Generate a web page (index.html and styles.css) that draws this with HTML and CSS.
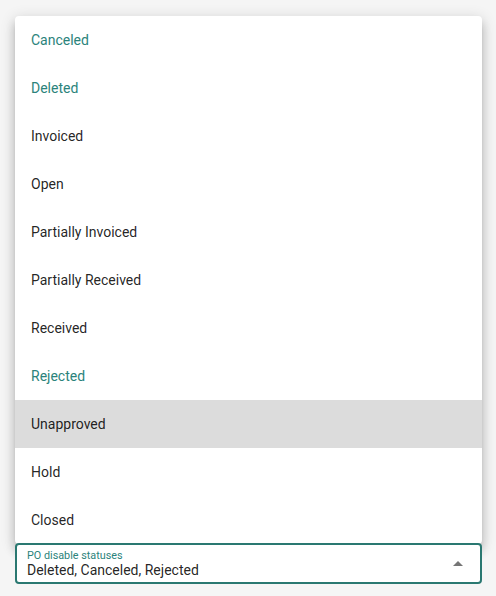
FILE: index.html
```html
<!DOCTYPE html>
<html>
<head>
<meta charset="utf-8">
<link rel="stylesheet" href="styles.css">
</head>
<body>
<div class="wrap">
  <ul class="menu">
    <li class="item selected">Canceled</li>
    <li class="item selected">Deleted</li>
    <li class="item">Invoiced</li>
    <li class="item">Open</li>
    <li class="item">Partially Invoiced</li>
    <li class="item">Partially Received</li>
    <li class="item">Received</li>
    <li class="item selected">Rejected</li>
    <li class="item hover">Unapproved</li>
    <li class="item">Hold</li>
    <li class="item">Closed</li>
  </ul>
  <div class="field">
    <div class="field-text">
      <div class="label">PO disable statuses</div>
      <div class="value">Deleted, Canceled, Rejected</div>
    </div>
    <svg class="arrow" width="10" height="5" viewBox="0 0 10 5"><path d="M0 5 L5 0 L10 5 Z" fill="#757575"/></svg>
  </div>
</div>
</body>
</html>
```
FILE: styles.css
```css
html, body {
  margin: 0;
  padding: 0;
  background: #f5f5f5;
  font-family: Roboto, "Liberation Sans", sans-serif;
}
.wrap {
  padding: 16px 14px 0 15px;
}
.menu {
  list-style: none;
  margin: 0;
  padding: 0;
  background: #fff;
  border-radius: 4px;
  box-shadow: 0 5px 5px -3px rgba(0,0,0,0.2), 0 8px 10px 1px rgba(0,0,0,0.14), 0 3px 14px 2px rgba(0,0,0,0.12);
  overflow: hidden;
}
.item {
  height: 48px;
  line-height: 48px;
  padding-left: 16px;
  font-size: 14px;
  color: rgba(0,0,0,0.87);
}
.item.selected {
  color: #2b837b;
}
.item.hover {
  background: #dcdcdc;
}
.field {
  box-sizing: border-box;
  height: 41px;
  margin-top: -1px;
  border: 2px solid #2a7871;
  border-radius: 4px;
  background: #fff;
  display: flex;
  align-items: center;
  padding: 0 17px 0 10px;
}
.field-text {
  flex: 1;
  display: flex;
  flex-direction: column;
  margin-top: 1px;
}
.label {
  font-size: 10.8px;
  line-height: 12px;
  color: #2b837b;
}
.value {
  font-size: 14px;
  line-height: 17px;
  color: rgba(0,0,0,0.87);
}
.arrow {
  display: block;
}
```
